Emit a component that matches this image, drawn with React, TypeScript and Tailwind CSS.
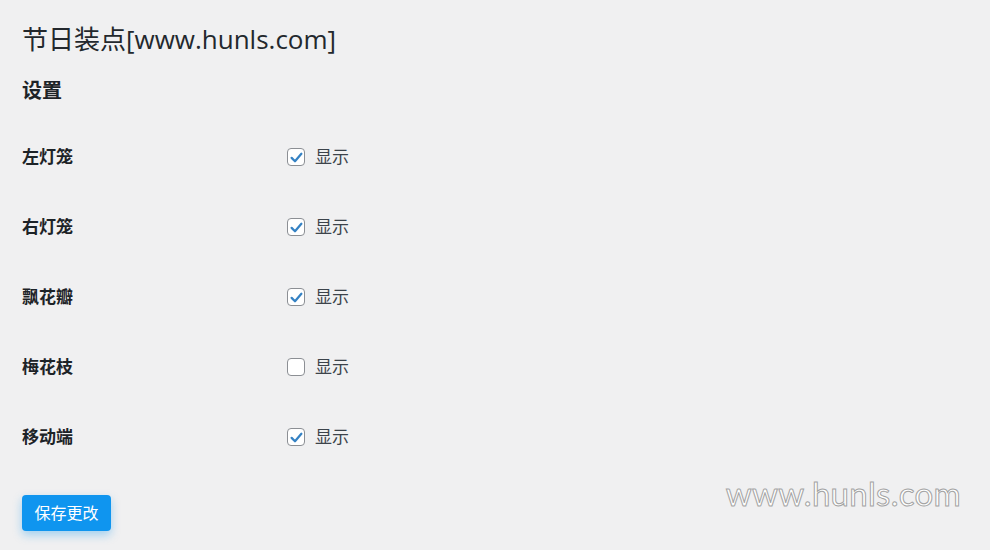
import React from "react";

const rows = [
  { label: "左灯笼", checked: true },
  { label: "右灯笼", checked: true },
  { label: "飘花瓣", checked: true },
  { label: "梅花枝", checked: false },
  { label: "移动端", checked: true },
];

const Check = ({ checked }: { checked: boolean }) => (
  <span className="flex h-[18px] w-[18px] items-center justify-center rounded-[4px] border border-[#8c8f94] bg-white">
    {checked && (
      <svg viewBox="0 0 20 20" className="h-[15px] w-[15px]">
        <path
          d="M3.5 10.5 L8 15 L16.5 5"
          fill="none"
          stroke="#3582c4"
          strokeWidth="3"
          strokeLinecap="round"
          strokeLinejoin="round"
        />
      </svg>
    )}
  </span>
);

const App = () => {
  return (
    <div
      className="relative h-[550px] w-[990px] overflow-hidden bg-[#f0f0f1] pl-[22px] text-[#1d2327]"
      style={{ fontFamily: '"Open Sans", "Noto Sans CJK SC", sans-serif' }}
    >
      <h1 className="pt-[20px] text-[26px] leading-[38px] font-normal text-[#23282d]">
        节日装点[www.hunls.com]
      </h1>
      <h2 className="mt-[19px] text-[20px] leading-[28px] font-bold">设置</h2>

      <div className="mt-[31px] flex flex-col">
        {rows.map((row) => (
          <div key={row.label} className="flex h-[70px] items-start pt-[9px]">
            <div className="w-[265px] text-[17px] leading-[24px] font-bold">{row.label}</div>
            <label className="flex items-center gap-[10px] text-[17px] leading-[24px] text-[#3c434a]">
              <Check checked={row.checked} />
              显示
            </label>
          </div>
        ))}
      </div>

      <button className="mt-[9px] h-[36px] w-[89px] rounded-[4px] bg-[#0f95ef] text-[16px] text-white shadow-[0_4px_10px_rgba(15,149,239,0.35)]">
        保存更改
      </button>

      <div
        className="absolute right-[29px] bottom-[40px] text-[33px] leading-none tracking-[0.3px] text-white [-webkit-text-stroke:1px_#a3a3a3]"
        style={{ fontFamily: "Lato, sans-serif" }}
      >
        www.hunls.com
      </div>
    </div>
  );
};

export default App;
